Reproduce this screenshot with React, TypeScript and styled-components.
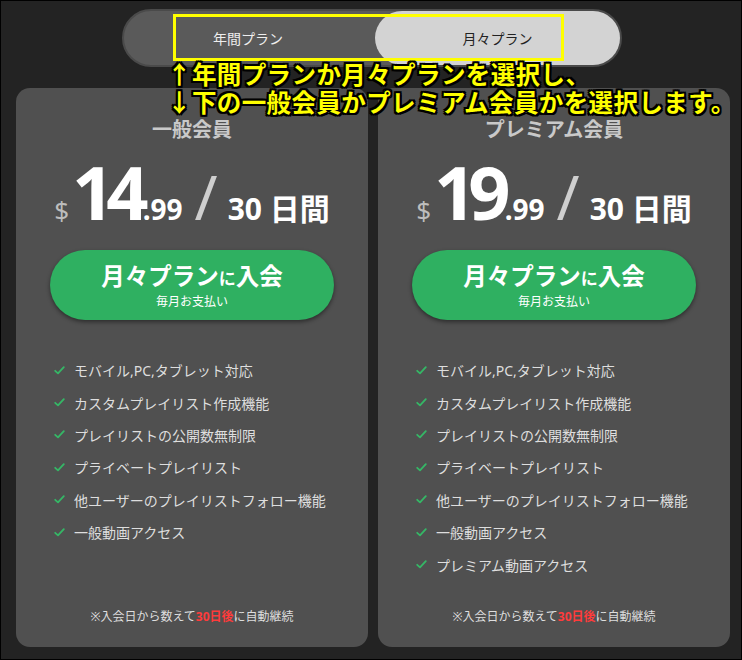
import React from 'react';
import styled, { createGlobalStyle } from 'styled-components';

const GlobalStyle = createGlobalStyle`
  html, body {
    margin: 0;
    padding: 0;
    background: #232323;
  }
  * {
    box-sizing: border-box;
  }
`;

const jp = `"Noto Sans", "Noto Sans CJK JP", sans-serif`;

const Page = styled.div`
  position: relative;
  width: 742px;
  height: 660px;
  border: 1px solid #000;
  background: #232323;
  font-family: ${jp};
  display: flex;
  flex-direction: column;
  align-items: center;
  padding-top: 8px;
  overflow: hidden;
`;

const Toggle = styled.div`
  width: 500px;
  height: 58px;
  border-radius: 29px;
  background: #5a5a5a;
  border: 2px solid #4a4a4a;
  display: grid;
  grid-template-columns: 1fr 1fr;
  padding: 0;
  margin-left: 2px;
`;

const ToggleOption = styled.div<{ $active?: boolean }>`
  display: flex;
  align-items: center;
  justify-content: center;
  border-radius: 27px;
  font-size: 14px;
  color: ${(p) => (p.$active ? '#222' : '#eee')};
  background: ${(p) => (p.$active ? '#d3d3d3' : 'transparent')};
  margin-left: ${(p) => (p.$active ? '3px' : '0')};
`;

const Cards = styled.div`
  display: grid;
  grid-template-columns: 352px 352px;
  gap: 10px;
  margin-top: 21px;
  margin-left: 4px;
`;

const Card = styled.div`
  height: 559px;
  background: #505050;
  border-radius: 14px;
  display: flex;
  flex-direction: column;
  align-items: center;
  padding-top: 28px;
`;

const Title = styled.div`
  font-size: 20px;
  font-weight: 700;
  color: #c9c9c9;
  line-height: 28px;
`;

const PriceRow = styled.div`
  display: flex;
  align-items: baseline;
  margin-top: 10px;
  height: 76px;
  margin-left: 0;
  color: #fff;
  font-weight: 700;
`;

const Dollar = styled.span`
  font-size: 26px;
  font-weight: 400;
  color: #bdbdbd;
  margin-right: 3px;
`;

const Big = styled.span`
  font-size: 74px;
  letter-spacing: -8px;
  line-height: 76px;
`;

const Cents = styled.span`
  font-size: 28px;
  margin-left: 2px;
`;

const Slash = styled.span`
  font-size: 62px;
  font-weight: 400;
  color: #cfcfcf;
  margin: 0 10px 0 12px;
`;

const Period = styled.span`
  font-size: 30px;
`;

const JoinButton = styled.button`
  width: 284px;
  height: 70px;
  margin-top: 20px;
  border: none;
  border-radius: 35px;
  background: #2fb061;
  box-shadow: 0 2px 4px rgba(0, 0, 0, 0.45);
  color: #fff;
  font-family: ${jp};
  display: flex;
  flex-direction: column;
  align-items: center;
  justify-content: center;
  padding: 0;
  cursor: pointer;
`;

const ButtonMain = styled.span`
  font-size: 23.5px;
  font-weight: 700;
  line-height: 30px;
  small {
    font-size: 17px;
  }
`;

const ButtonSub = styled.span`
  font-size: 12px;
  line-height: 16px;
`;

const Features = styled.ul`
  list-style: none;
  margin: 34px 0 0;
  padding: 0 0 0 38px;
  align-self: stretch;
`;

const Feature = styled.li`
  display: flex;
  align-items: center;
  height: 32.4px;
  font-size: 14px;
  color: #dedede;
  svg {
    margin-right: 9px;
    flex: 0 0 auto;
  }
`;

const Note = styled.div`
  margin-top: auto;
  margin-bottom: 22px;
  font-size: 12px;
  color: #dedede;
  strong {
    color: #ff3b3b;
    font-weight: 700;
  }
`;

const Highlight = styled.div`
  position: absolute;
  left: 172px;
  top: 13px;
  width: 391px;
  height: 47px;
  border: 3px solid #ffff00;
`;

const Annotation = styled.div`
  position: absolute;
  left: 166px;
  top: 60px;
  font-size: 24.5px;
  font-weight: 700;
  line-height: 28px;
  letter-spacing: 0.4px;
  color: #ffff00;
  white-space: nowrap;
  text-shadow:
    2px 0 0 #000, -2px 0 0 #000, 0 2px 0 #000, 0 -2px 0 #000,
    2px 2px 0 #000, -2px -2px 0 #000, 2px -2px 0 #000, -2px 2px 0 #000;
`;

const Check = () => (
  <svg width='11' height='9' viewBox='0 0 11 9'>
    <path
      d='M1.2 4.8 L4 7.4 L9.8 1.2'
      fill='none'
      stroke='#35b766'
      strokeWidth='1.8'
      strokeLinecap='round'
      strokeLinejoin='round'
    />
  </svg>
);

interface Plan {
  name: string;
  price: string;
  features: string[];
}

const baseFeatures = [
  'モバイル,PC,タブレット対応',
  'カスタムプレイリスト作成機能',
  'プレイリストの公開数無制限',
  'プライベートプレイリスト',
  '他ユーザーのプレイリストフォロー機能',
  '一般動画アクセス',
];

const plans: Plan[] = [
  { name: '一般会員', price: '14', features: baseFeatures },
  {
    name: 'プレミアム会員',
    price: '19',
    features: [...baseFeatures, 'プレミアム動画アクセス'],
  },
];

const PlanCard = ({ plan }: { plan: Plan }) => (
  <Card>
    <Title>{plan.name}</Title>
    <PriceRow>
      <Dollar>$</Dollar>
      <Big>{plan.price}</Big>
      <Cents>.99</Cents>
      <Slash>/</Slash>
      <Period>30 日間</Period>
    </PriceRow>
    <JoinButton>
      <ButtonMain>
        月々プラン<small>に</small>入会
      </ButtonMain>
      <ButtonSub>毎月お支払い</ButtonSub>
    </JoinButton>
    <Features>
      {plan.features.map((f) => (
        <Feature key={f}>
          <Check />
          {f}
        </Feature>
      ))}
    </Features>
    <Note>
      ※入会日から数えて<strong>30日後</strong>に自動継続
    </Note>
  </Card>
);

export default function App() {
  return (
    <>
      <GlobalStyle />
      <Page>
        <Toggle>
          <ToggleOption>年間プラン</ToggleOption>
          <ToggleOption $active>月々プラン</ToggleOption>
        </Toggle>
        <Cards>
          {plans.map((p) => (
            <PlanCard key={p.name} plan={p} />
          ))}
        </Cards>
        <Highlight />
        <Annotation>
          ↑年間プランか月々プランを選択し、
          <br />
          ↓下の一般会員かプレミアム会員かを選択します。
        </Annotation>
      </Page>
    </>
  );
}
